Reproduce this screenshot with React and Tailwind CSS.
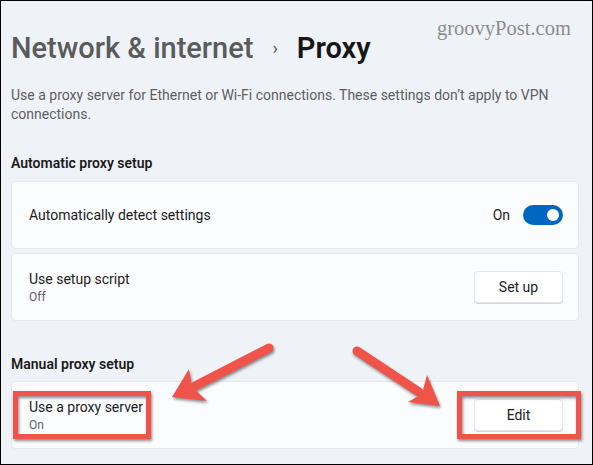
import React from "react";

function Card({ children, className = "" }) {
  return (
    <div
      className={
        "flex items-center justify-between rounded-[4px] border border-[#e6e8ec] bg-[#fbfcfd] pl-[17px] pr-[15px] " +
        className
      }
    >
      {children}
    </div>
  );
}

function Btn({ children }) {
  return (
    <button className="flex h-[32px] w-[89px] items-center justify-center rounded-[4px] border border-[#e3e5e8] bg-white text-[14px] text-[#1b1b1b] shadow-[0_1px_0_#d6d8dc]">
      {children}
    </button>
  );
}

export default function App() {
  return (
    <div className="relative h-[465px] w-[593px] overflow-hidden border border-black bg-[#eff3f8] font-['Roboto',sans-serif] text-[#1b1b1b]">
      <div className="pl-[10px] pr-[13px] pt-[29px]">
        <div className="flex items-center text-[29px] leading-[36px]">
          <span className="font-medium text-[#5b5b5b]">Network &amp; internet</span>
          <span className="ml-[19px] mr-[19px] text-[18px] text-[#5b5b5b]">›</span>
          <span className="font-semibold text-[#161616]">Proxy</span>
        </div>
        <p className="mt-[20px] w-[560px] text-[14px] leading-[19px] text-[#5e5e5e]">
          Use a proxy server for Ethernet or Wi-Fi connections. These settings don’t apply to VPN connections.
        </p>
        <h2 className="mt-[29px] text-[14px] font-semibold leading-[20px]">Automatic proxy setup</h2>
        <div className="mt-[8px] flex flex-col gap-[4px]">
          <Card className="h-[68px]">
            <span className="text-[14px]">Automatically detect settings</span>
            <div className="flex items-center gap-[13px]">
              <span className="text-[14px]">On</span>
              <div className="flex h-[20px] w-[40px] items-center justify-end rounded-full bg-[#0067c0] pr-[4px]">
                <div className="h-[12px] w-[12px] rounded-full bg-white" />
              </div>
            </div>
          </Card>
          <Card className="h-[68px]">
            <div className="flex flex-col">
              <span className="text-[14px] leading-[20px]">Use setup script</span>
              <span className="text-[12px] leading-[16px] text-[#5e5e5e]">Off</span>
            </div>
            <Btn>Set up</Btn>
          </Card>
        </div>
        <h2 className="mt-[33px] text-[14px] font-semibold leading-[20px]">Manual proxy setup</h2>
        <Card className="mt-[7px] h-[68px]">
          <div className="flex flex-col">
            <span className="text-[14px] leading-[20px]">Use a proxy server</span>
            <span className="text-[12px] leading-[16px] text-[#5e5e5e]">On</span>
          </div>
          <Btn>Edit</Btn>
        </Card>
      </div>

      <span className="absolute left-[436px] top-[17px] font-['Liberation_Serif',serif] text-[20.5px] leading-[21px] text-[#8c8c8c]">
        groovyPost.com
      </span>

      <svg
        className="absolute left-[-1px] top-[-1px] [filter:drop-shadow(1.5px_2px_1.5px_rgba(0,0,0,0.45))]"
        width="593"
        height="465"
        viewBox="0 0 593 465"
      >
        <g fill="none" stroke="#ef5349" strokeWidth="5">
          <rect x="15.5" y="393.5" width="133" height="43" />
          <rect x="459.5" y="393.5" width="119" height="43" />
        </g>
        <g stroke="#ef5349" strokeWidth="9" strokeLinecap="round">
          <line x1="269" y1="348" x2="195" y2="386" />
          <line x1="357" y1="351" x2="419" y2="392" />
        </g>
        <g fill="#ef5349">
          <polygon points="172,397 189,369 192,387 207,401" />
          <polygon points="440,406 408,402 422,394 427,375" />
        </g>
      </svg>
    </div>
  );
}
